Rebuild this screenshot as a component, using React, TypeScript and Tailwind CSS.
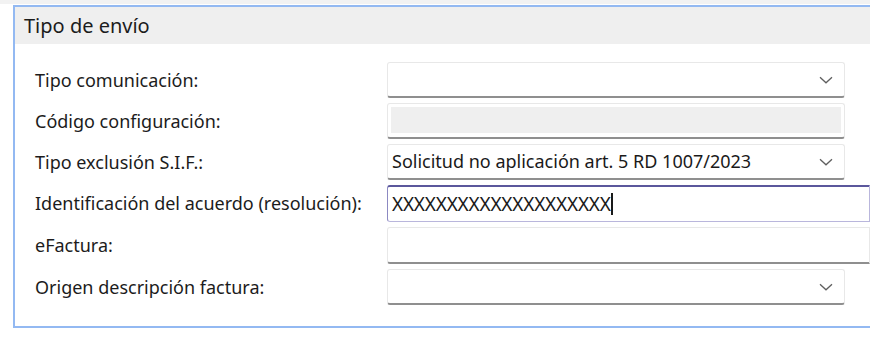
import React from "react";

// ─── Chevron for the combo boxes ─────────────────────────────────────────────

function Chevron() {
  return (
    <svg width="14" height="8" viewBox="0 0 14 8" className="shrink-0">
      <path d="M1 1.2 L7 6.8 L13 1.2" fill="none" stroke="#5f5f5f" strokeWidth="1.3" />
    </svg>
  );
}

// ─── Field kinds ─────────────────────────────────────────────────────────────

type Kind = "select" | "disabled" | "focused" | "text";

interface Field {
  label: string;
  kind: Kind;
  value?: string;
}

const FIELDS: Field[] = [
  { label: "Tipo comunicación:", kind: "select" },
  { label: "Código configuración:", kind: "disabled" },
  { label: "Tipo exclusión S.I.F.:", kind: "select", value: "Solicitud no aplicación art. 5 RD 1007/2023" },
  { label: "Identificación del acuerdo (resolución):", kind: "focused", value: "XXXXXXXXXXXXXXXXXXXX" },
  { label: "eFactura:", kind: "text" },
  { label: "Origen descripción factura:", kind: "select" },
];

function Control({ f }: { f: Field }) {
  if (f.kind === "focused") {
    return (
      <div className="h-[37px] w-[483px] flex items-center pl-[4px] border border-[#b9b6dc] border-t-2 border-t-[#5b579c] border-l-[#8c89c2] rounded-l-[3px] bg-white">
        <span className="text-[#1a1a1a] text-[19px] tracking-[-0.2px]">{f.value}</span>
        <span className="w-[2px] h-[22px] bg-[#1a1a1a]" />
      </div>
    );
  }
  if (f.kind === "text") {
    return (
      <div className="h-[37px] w-[483px] border border-[#e8e8e8] border-b-2 border-b-[#8f8f8f] rounded-l-[3px] bg-white" />
    );
  }
  if (f.kind === "disabled") {
    return (
      <div className="h-[36px] w-[458px] p-[3px] pb-[4px] border border-[#e8e8e8] border-b-2 border-b-[#8f8f8f] rounded-[3px] bg-white">
        <div className="h-full bg-[#efefef]" />
      </div>
    );
  }
  return (
    <div className="h-[36px] w-[458px] flex items-center justify-between pl-[4px] pr-[11px] border border-[#e8e8e8] border-b-2 border-b-[#8f8f8f] rounded-[3px] bg-white">
      <span className="text-[#1a1a1a] truncate">{f.value}</span>
      <Chevron />
    </div>
  );
}

export default function App() {
  return (
    <div
      className="w-[892px] h-[345px] bg-white overflow-hidden text-[18px] text-[#1c1c1c]"
      style={{ fontFamily: '"Noto Sans", "Open Sans", sans-serif' }}
    >
      <div className="h-[4px] bg-[#f2f2f2] w-[870px]" />
      <div className="ml-[13px] w-[857px] mt-[1px] border-l-2 border-t-2 border-b-2 border-[#93b9f2]">
        <div className="h-[37px] bg-[#efefef] flex items-center pl-[9px] text-[20px]">Tipo de envío</div>
        <div className="pt-[18px] pb-[21px] flex flex-col gap-[5px]">
          {FIELDS.map((f) => (
            <div key={f.label} className="flex items-center">
              <div className="w-[372px] pl-[20px] whitespace-nowrap">{f.label}</div>
              <Control f={f} />
            </div>
          ))}
        </div>
      </div>
    </div>
  );
}
